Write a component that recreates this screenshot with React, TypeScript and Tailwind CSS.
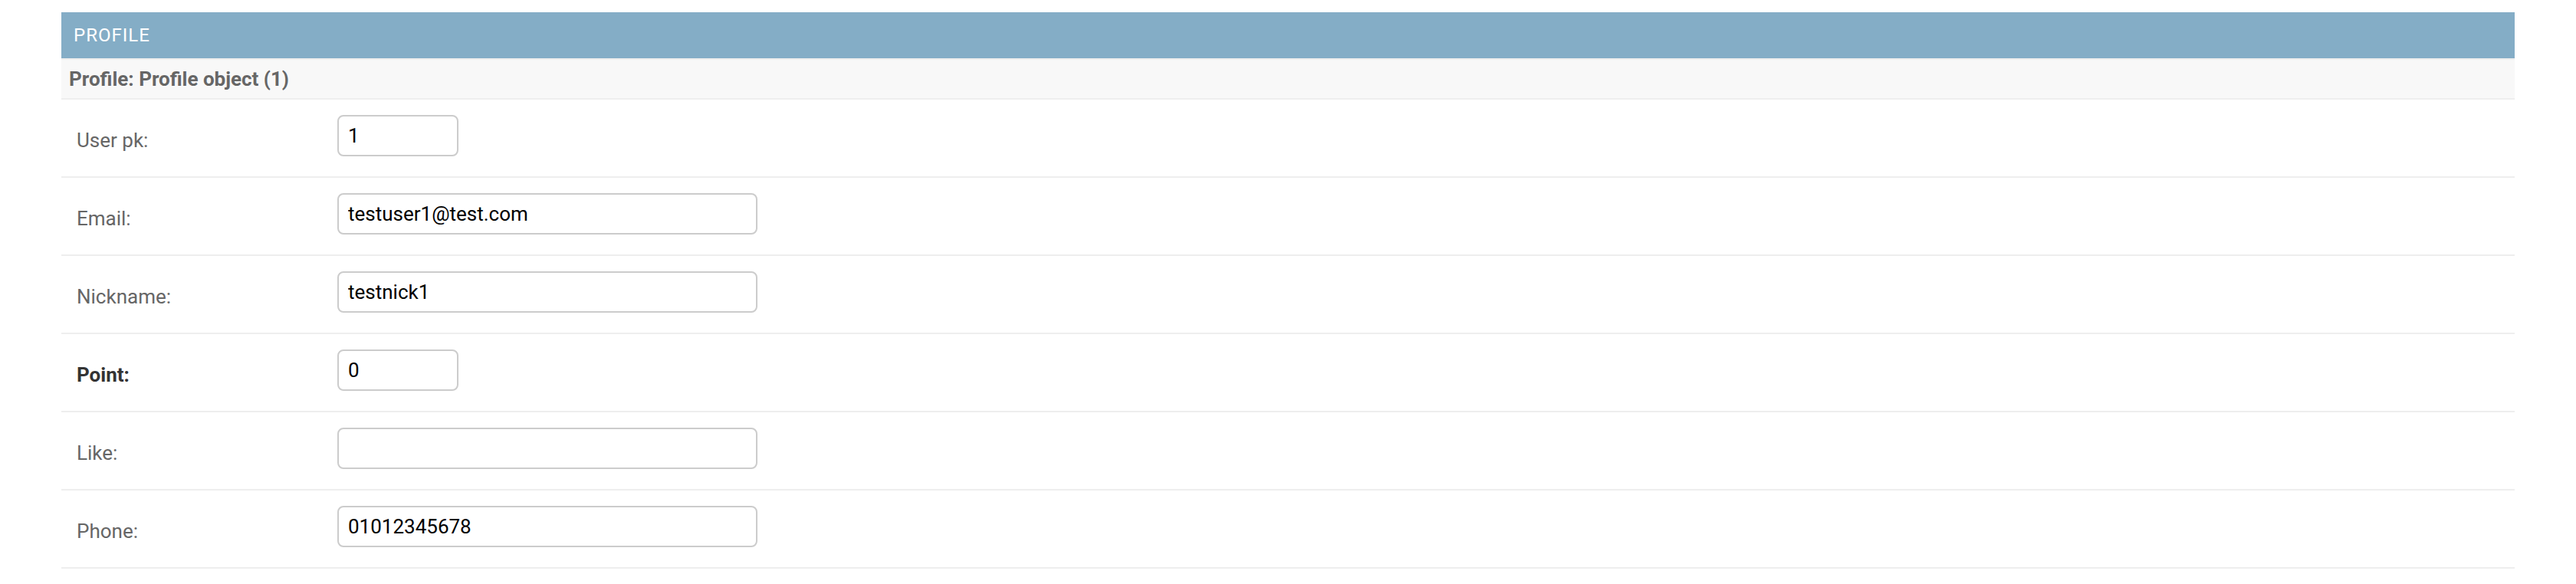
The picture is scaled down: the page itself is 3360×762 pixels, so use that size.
type Field = { id: string; label: string; value: string; short?: boolean; required?: boolean };

const fields: Field[] = [
  { id: "user_pk", label: "User pk:", value: "1", short: true },
  { id: "email", label: "Email:", value: "testuser1@test.com" },
  { id: "nickname", label: "Nickname:", value: "testnick1" },
  { id: "point", label: "Point:", value: "0", short: true, required: true },
  { id: "like", label: "Like:", value: "" },
  { id: "phone", label: "Phone:", value: "01012345678" },
];

function FieldRow({ field }: { field: Field }) {
  return (
    <div className="flex items-start border-b-2 border-[#eeeeee] pt-5 pb-[22px] pl-5">
      <label
        htmlFor={field.id}
        className={`w-[340px] shrink-0 pt-2 text-[26px] leading-[50px] ${field.required ? "font-bold text-[#333333]" : "text-[#666666]"}`}
      >
        {field.label}
      </label>
      <input
        id={field.id}
        type="text"
        defaultValue={field.value}
        className={`h-[54px] rounded-lg border-2 border-[#cccccc] bg-white px-3 text-[26px] text-black ${field.short ? "w-[158px]" : "w-[548px]"}`}
      />
    </div>
  );
}

export default function App() {
  return (
    <main className="min-h-screen bg-white px-20 pt-4 font-['Roboto',sans-serif]">
      <h2 className="bg-[#84adc6] px-4 py-4 text-[24px] leading-7 tracking-[1px] text-white uppercase">Profile</h2>
      <h3 className="border-y-2 border-[#eeeeee] bg-[#f8f8f8] px-[10px] text-[26px] leading-[50px] font-bold text-[#666666]">
        Profile: Profile object (1)
      </h3>
      {fields.map((f) => (
        <FieldRow key={f.id} field={f} />
      ))}
    </main>
  );
}
